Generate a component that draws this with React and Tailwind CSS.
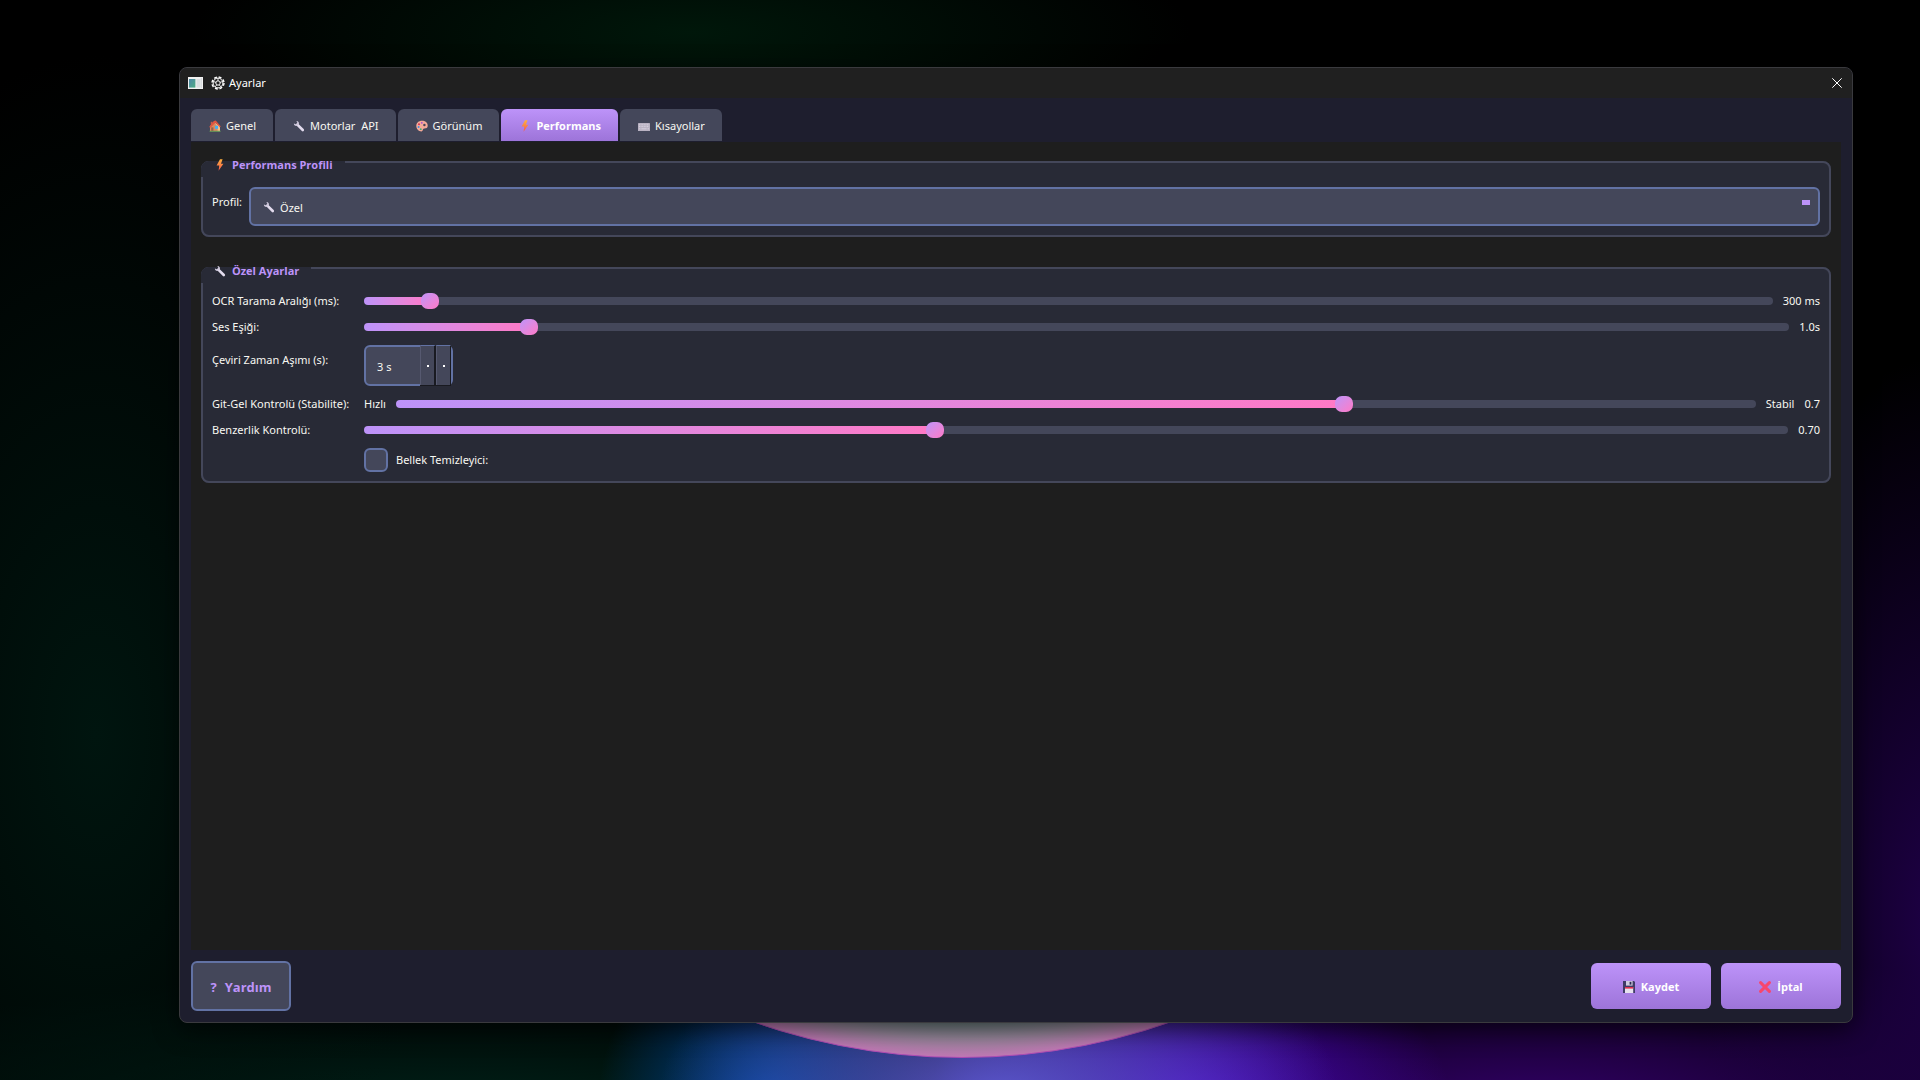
import React, { useState } from 'react';

// --- Icons ---
const WrenchIcon = () => (
    <svg viewBox="0 0 12 12" className="h-3 w-3 shrink-0" aria-hidden="true">
        <path d="M4.6 4.8 9.8 10" stroke="#e3dcee" strokeWidth="2.6" strokeLinecap="round" />
        <path d="M0.9 3.4C0.7 5.2 2.4 6.4 4.2 5.8L5.9 4.1C6.4 2.4 5.2 0.8 3.4 0.9L4.3 2.7 2.8 4.2Z" fill="#cfc8dc" />
    </svg>
);

const BoltIcon = () => (
    <svg viewBox="0 0 12 12" className="h-3 w-3 shrink-0" aria-hidden="true">
        <defs>
            <linearGradient id="bolt" x1="0" y1="0" x2="0" y2="1">
                <stop offset="0" stopColor="#ffb13d" />
                <stop offset="1" stopColor="#f4564f" />
            </linearGradient>
        </defs>
        <path d="M6 0.3 2.6 6.5H5.2L4.6 11.8 9.4 4.8H7L8.6 0.3Z" fill="url(#bolt)" />
    </svg>
);

const HouseIcon = () => (
    <svg viewBox="0 0 12 12" className="h-3 w-3 shrink-0" aria-hidden="true">
        <rect x="1.8" y="1.8" width="1.8" height="4" fill="#c65a4a" />
        <path d="M1 6 5 2.5 11 6V11.2H1Z" fill="#d98a5e" />
        <path d="M5.4 2.4 8.6 6.8V11.2H11V6Z" fill="#f0c08a" />
        <path d="M0.2 7 4.8 1 6.8 0.6 11.8 6.4 10.8 7.2 6.4 2.8 1.4 7.8Z" fill="#e0563f" />
        <rect x="2.2" y="7.4" width="2.2" height="3.8" fill="#9a6048" />
        <rect x="6" y="5.8" width="3" height="3" fill="#42b0f5" />
        <path d="M0.6 10.8H11.6V11.8H0.6Z" fill="#5f9e58" />
    </svg>
);

const PaletteIcon = () => (
    <svg viewBox="0 0 12 12" className="h-3 w-3 shrink-0" aria-hidden="true">
        <path d="M6 0.8C2.6 0.8 0.3 3 0.3 6S2.6 11.4 5.4 11.4C7.2 11.4 6.4 9.4 7.6 8.8 8.8 8.2 11.7 9.2 11.7 5.6 11.7 2.8 9.2 0.8 6 0.8Z" fill="#f5aa98" />
        <circle cx="3" cy="4.2" r="1" fill="#d9304f" />
        <circle cx="5.8" cy="2.8" r="0.9" fill="#a648d6" />
        <circle cx="2.6" cy="7" r="1" fill="#3f8fe0" />
        <circle cx="4.8" cy="9.2" r="0.9" fill="#3fae74" />
        <circle cx="8.4" cy="5" r="1.2" fill="#4a4458" />
    </svg>
);

const KeyboardIcon = () => (
    <svg viewBox="0 0 12 12" className="h-3 w-3 shrink-0" aria-hidden="true">
        <rect x="0" y="3" width="12" height="8" rx="0.6" fill="#b9b2c2" />
        <path d="M1 4.8H11M1 6.6H11" stroke="#d6d0de" strokeWidth="1" strokeDasharray="1 0.6" />
        <path d="M1 8.8H2.4M3.4 8.8H8.6M9.6 8.8H11" stroke="#d6d0de" strokeWidth="1" />
    </svg>
);

const FloppyIcon = () => (
    <svg viewBox="0 0 12 12" className="h-3 w-3 shrink-0" aria-hidden="true">
        <path d="M0 0H11L12 1V12H0Z" fill="#3f3a66" />
        <rect x="3" y="0" width="6.6" height="4.6" fill="#cfcbe0" />
        <rect x="6.6" y="0.8" width="1.8" height="2.8" fill="#2c2850" />
        <rect x="2" y="6" width="8.2" height="6" fill="#e6e2ee" />
        <rect x="2" y="6" width="8.2" height="1.6" fill="#e0304f" />
    </svg>
);

const CrossIcon = () => (
    <svg viewBox="0 0 12 12" className="h-3 w-3 shrink-0" aria-hidden="true">
        <path d="M1.6 1.6 10.4 10.4M10.4 1.6 1.6 10.4" stroke="#f8466c" strokeWidth="3" strokeLinecap="round" />
    </svg>
);

const GearIcon = () => (
    <svg viewBox="0 0 14 14" className="h-3.5 w-3.5 shrink-0" fill="none" stroke="#ffffff" aria-hidden="true">
        <circle cx="7" cy="7" r="6" strokeWidth="1.4" strokeDasharray="2.9 1.81" />
        <circle cx="7" cy="7" r="4.9" strokeWidth="1" />
        <circle cx="7" cy="7" r="2.2" strokeWidth="1" />
        <path d="M7 4.8V2.2M9.1 6.4 11.5 5.5M8.2 8.8 9.8 10.8M5.8 8.8 4.2 10.8M4.9 6.4 2.5 5.5" strokeWidth="0.9" />
    </svg>
);

const AppIcon = () => (
    <svg viewBox="0 0 15 12" className="h-3 w-[15px] shrink-0" aria-hidden="true">
        <defs>
            <linearGradient id="appPane" x1="0" y1="0" x2="1" y2="1">
                <stop offset="0" stopColor="#4f86a8" />
                <stop offset="1" stopColor="#4fae84" />
            </linearGradient>
        </defs>
        <rect width="15" height="12" fill="#f2f2f2" />
        <rect x="1" y="2" width="6.4" height="8.6" fill="url(#appPane)" />
        <rect x="8.4" y="2" width="4.2" height="8.6" fill="#dcdfe2" />
        <path d="M13.4 1V11" stroke="#c4c8cc" strokeWidth="0.6" />
    </svg>
);

const TABS = [
    { id: 'genel', label: 'Genel', icon: <HouseIcon /> },
    { id: 'motorlar', label: 'Motorlar \u00a0API', icon: <WrenchIcon /> },
    { id: 'gorunum', label: 'Görünüm', icon: <PaletteIcon /> },
    { id: 'performans', label: 'Performans', icon: <BoltIcon /> },
    { id: 'kisayollar', label: 'Kısayollar', icon: <KeyboardIcon /> },
];

// --- Sub-Component: Desktop Background ---
const Wallpaper = () => (
    <div className="absolute inset-0 overflow-hidden bg-black" aria-hidden="true">
        <div className="absolute inset-0 bg-[radial-gradient(ellipse_500px_120px_at_36%_3%,#00170a,transparent),radial-gradient(ellipse_340px_680px_at_5%_68%,#00150f,transparent),radial-gradient(ellipse_240px_560px_at_101%_85%,#1e0046,transparent),radial-gradient(ellipse_640px_160px_at_80%_102%,#300064,transparent),radial-gradient(ellipse_700px_140px_at_24%_103%,#002219,transparent)]" />
        <div className="absolute inset-0 bg-[radial-gradient(ellipse_340px_200px_at_52%_102%,#5c58d0,transparent),radial-gradient(ellipse_260px_160px_at_62%_102%,#4c06c4,transparent),radial-gradient(ellipse_170px_170px_at_40%_102%,#00469a,transparent)]" />
        <div className="absolute inset-x-0 bottom-0 h-40 overflow-hidden">
            <div className="absolute bottom-[22px] left-[50.1%] h-[1260px] w-[1260px] -translate-x-1/2 rounded-full border border-[#b04cb4] bg-[radial-gradient(circle_closest-side,#6c8482_94%,#96869a_97%,#c078b4_100%)]" />
        </div>
    </div>
);

// --- Sub-Component: Group Box ---
const GroupBox = ({ icon, title, children }) => (
    <fieldset className="relative min-w-0 rounded-lg border-2 border-[#44475a] bg-[#282a36] px-[9px] pt-6 pb-[9px]">
        <legend className="absolute -top-0.5 -left-0.5 flex h-4 rounded-tl-lg bg-[#282a36] pr-3 pl-[13px]">
            <span className="flex h-2 items-center gap-1.5 font-['Open_Sans',sans-serif] font-bold text-[#bd93f9]">
                {icon}
                {title}
            </span>
        </legend>
        {children}
    </fieldset>
);

// --- Sub-Component: Slider ---
const Slider = ({ id, min, max, step, value, onChange }) => {
    const ratio = (value - min) / (max - min);
    return (
        <input
            id={id}
            type="range"
            min={min}
            max={max}
            step={step}
            value={value}
            onChange={(e) => onChange(parseFloat(e.target.value))}
            style={{ backgroundSize: `calc(9px + (100% - 18px) * ${ratio}) 100%` }}
            className="h-2 min-w-0 flex-1 appearance-none rounded-sm bg-[#44475a] bg-linear-to-r from-[#bd93f9] to-[#ff79c6] bg-no-repeat [&::-webkit-slider-thumb]:h-4 [&::-webkit-slider-thumb]:w-[18px] [&::-webkit-slider-thumb]:appearance-none [&::-webkit-slider-thumb]:rounded-[7px] [&::-webkit-slider-thumb]:bg-linear-to-br [&::-webkit-slider-thumb]:from-[#bd93f9] [&::-webkit-slider-thumb]:to-[#ff79c6]"
        />
    );
};

// --- Main Component ---
const App = () => {
    const [activeTab, setActiveTab] = useState('performans');
    const [profile, setProfile] = useState('ozel');
    const [ocrInterval, setOcrInterval] = useState(300);
    const [voiceThreshold, setVoiceThreshold] = useState(1);
    const [timeoutSec, setTimeoutSec] = useState(3);
    const [stability, setStability] = useState(0.7);
    const [similarity, setSimilarity] = useState(0.7);
    const [memoryCleaner, setMemoryCleaner] = useState(false);

    return (
        <div className="relative flex min-h-screen bg-black pt-[67px] pr-[67px] pb-[57px] pl-[179px] font-['Noto_Sans',sans-serif] text-[11px] leading-4 text-[#f8f8f2]">
            <Wallpaper />

            <main className="relative flex flex-1 flex-col overflow-hidden rounded-lg border border-[#3a3a3e] bg-[#1e1e2e] shadow-[0_6px_24px_rgba(0,0,0,0.6)]">
                <header className="flex h-[30px] items-center justify-between bg-[#202020] pr-2.5 pl-2">
                    <h1 className="flex items-center gap-1 text-white">
                        <AppIcon />
                        <span className="ml-1"><GearIcon /></span>
                        Ayarlar
                    </h1>
                    <button type="button" aria-label="Kapat">
                        <svg viewBox="0 0 10 10" className="h-2.5 w-2.5" stroke="#ffffff" strokeWidth="1" aria-hidden="true">
                            <path d="M0.3 0.3 9.7 9.7M9.7 0.3 0.3 9.7" />
                        </svg>
                    </button>
                </header>

                <div className="flex flex-1 flex-col px-[11px] pt-[11px] pb-[11px]">
                    <nav role="tablist" className="flex gap-0.5">
                        {TABS.map(tab => (
                            <button
                                key={tab.id}
                                type="button"
                                role="tab"
                                aria-selected={activeTab === tab.id}
                                onClick={() => setActiveTab(tab.id)}
                                className={`flex h-8 items-center gap-[5px] rounded-t-md pt-0.5 pr-[17px] pl-[18px] ${activeTab === tab.id ? "bg-linear-to-b from-[#bd93f9] to-[#9d74d9] font-['Open_Sans',sans-serif] font-bold text-white" : 'bg-[#44475a]'}`}
                            >
                                {tab.icon}
                                {tab.label}
                            </button>
                        ))}
                    </nav>

                    {/* Performance tab content */}
                    <div role="tabpanel" className="flex flex-1 flex-col gap-[30px] border-t border-[#1e1e2e] bg-[#1e1e1e] px-2.5 pt-[19px]">
                        <GroupBox icon={<BoltIcon />} title="Performans Profili">
                            <div className="flex items-start gap-[7px]">
                                <label htmlFor="profile" className="pt-[7px]">Profil:</label>
                                <div className="relative flex-1">
                                    <select
                                        id="profile"
                                        value={profile}
                                        onChange={(e) => setProfile(e.target.value)}
                                        className="block h-[39px] w-full appearance-none rounded-md border-2 border-[#6272a4] bg-[#44475a] pt-0.5 pl-[29px]"
                                    >
                                        <option value="ozel">Özel</option>
                                    </select>
                                    <span className="pointer-events-none absolute top-3.5 left-3.5"><WrenchIcon /></span>
                                    <span className="pointer-events-none absolute top-[13px] right-2.5 h-[5px] w-2 bg-[#bd93f9]" />
                                </div>
                            </div>
                        </GroupBox>

                        <GroupBox icon={<WrenchIcon />} title="Özel Ayarlar">
                            <div className="grid grid-cols-[142px_1fr] gap-2.5">
                                <label htmlFor="ocr" className="whitespace-nowrap">OCR Tarama Aralığı (ms):</label>
                                <div className="flex items-center gap-2.5">
                                    <Slider id="ocr" min={100} max={5000} step={50} value={ocrInterval} onChange={setOcrInterval} />
                                    <output htmlFor="ocr">{ocrInterval} ms</output>
                                </div>

                                <label htmlFor="voice" className="whitespace-nowrap">Ses Eşiği:</label>
                                <div className="flex items-center gap-2.5">
                                    <Slider id="voice" min={0.5} max={5} step={0.1} value={voiceThreshold} onChange={setVoiceThreshold} />
                                    <output htmlFor="voice">{voiceThreshold.toFixed(1)}s</output>
                                </div>

                                <label htmlFor="timeout" className="pt-[7px] whitespace-nowrap">Çeviri Zaman Aşımı (s):</label>
                                <div className="flex h-[41px] w-[89px] rounded-md border-2 border-[#6272a4] bg-[#44475a]">
                                    <input
                                        id="timeout"
                                        type="text"
                                        value={`${timeoutSec} s`}
                                        onChange={(e) => setTimeoutSec(parseInt(e.target.value, 10) || 0)}
                                        className="min-w-0 flex-1 pt-0.5 pl-[11px]"
                                    />
                                    <div className="-my-0.5 flex border-b border-[#191a21]">
                                        <button type="button" aria-label="Artır" onClick={() => setTimeoutSec(timeoutSec + 1)} className="flex w-4 items-center justify-center border-t border-r-2 border-l border-t-[#6272a4] border-r-[#191a21] border-l-[#565970] bg-[#44475a]">
                                            <span className="h-0.5 w-0.5 bg-white" />
                                        </button>
                                        <button type="button" aria-label="Azalt" onClick={() => setTimeoutSec(Math.max(0, timeoutSec - 1))} className="flex w-[15px] items-center justify-center border-t border-r border-l border-t-[#6272a4] border-r-[#191a21] border-l-[#565970] bg-[#44475a]">
                                            <span className="h-0.5 w-0.5 bg-white" />
                                        </button>
                                    </div>
                                </div>

                                <label htmlFor="stability" className="whitespace-nowrap">Git-Gel Kontrolü (Stabilite):</label>
                                <div className="flex items-center gap-2.5">
                                    <span>Hızlı</span>
                                    <Slider id="stability" min={0} max={1} step={0.1} value={stability} onChange={setStability} />
                                    <span>Stabil</span>
                                    <output htmlFor="stability">{stability.toFixed(1)}</output>
                                </div>

                                <label htmlFor="similarity" className="whitespace-nowrap">Benzerlik Kontrolü:</label>
                                <div className="flex items-center gap-2.5">
                                    <Slider id="similarity" min={0.5} max={1} step={0.01} value={similarity} onChange={setSimilarity} />
                                    <output htmlFor="similarity">{similarity.toFixed(2)}</output>
                                </div>

                                <div className="col-start-2 flex items-center gap-2">
                                    <input
                                        id="memory"
                                        type="checkbox"
                                        checked={memoryCleaner}
                                        onChange={(e) => setMemoryCleaner(e.target.checked)}
                                        className="h-6 w-6 appearance-none rounded-md border-2 border-[#6272a4] bg-[#44475a] checked:bg-[#bd93f9]"
                                    />
                                    <label htmlFor="memory">Bellek Temizleyici:</label>
                                </div>
                            </div>
                        </GroupBox>
                    </div>

                    <footer className="flex items-center gap-2.5 pt-[11px] font-['Open_Sans',sans-serif] font-bold">
                        <button type="button" className="mr-auto flex h-[50px] w-[100px] items-center justify-center gap-2 rounded-md border-2 border-[#6272a4] bg-[#44475a] pt-0.5 text-[13px] text-[#bd93f9]">
                            <span>?</span>
                            Yardım
                        </button>
                        <button type="button" className="flex h-[46px] w-[120px] items-center justify-center gap-1.5 rounded-md bg-linear-to-b from-[#bd93f9] to-[#9d74d9] pt-0.5 text-white">
                            <FloppyIcon />
                            Kaydet
                        </button>
                        <button type="button" className="flex h-[46px] w-[120px] items-center justify-center gap-1.5 rounded-md bg-linear-to-b from-[#bd93f9] to-[#9d74d9] pt-0.5 text-white">
                            <CrossIcon />
                            İptal
                        </button>
                    </footer>
                </div>
            </main>
        </div>
    );
};

export default App;
